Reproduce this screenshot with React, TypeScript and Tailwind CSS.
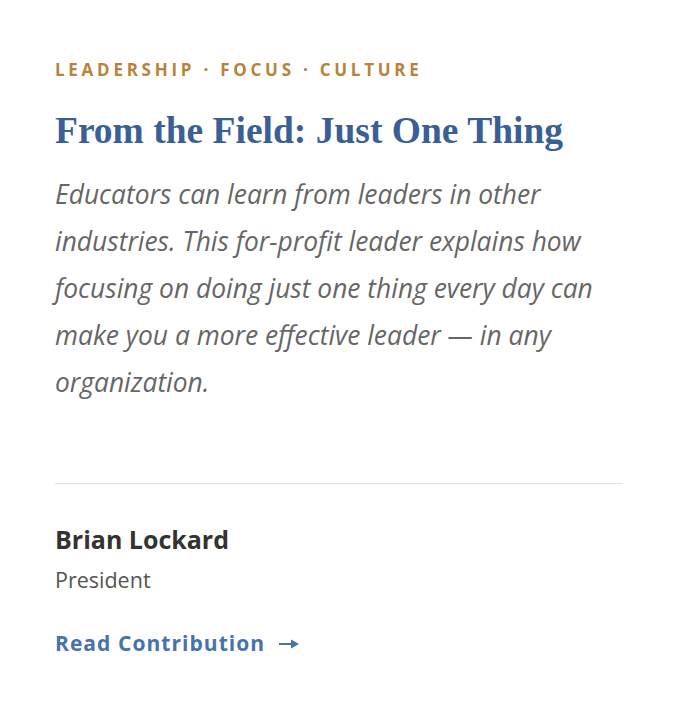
export default function App() {
  return (
    <div className="w-[678px] h-[724px] bg-white px-[55px] pt-[59px]" style={{ fontFamily: '"Open Sans", "Noto Sans", sans-serif' }}>
      <div className="text-[17px] leading-[22px] font-bold tracking-[0.22em] text-[#b7833b]">
        LEADERSHIP · FOCUS · CULTURE
      </div>
      <h1
        className="mt-[27px] text-[37.5px] leading-[46px] font-bold text-[#3a5f96]"
        style={{ fontFamily: '"Liberation Serif", "DejaVu Serif", serif' }}
      >
        From the Field: Just One Thing
      </h1>
      <p className="mt-[17px] max-w-[550px] text-[26.4px] leading-[47px] italic text-[#666666]">
        Educators can learn from leaders in other industries. This for-profit leader explains how focusing on doing just one thing every day can make you a more effective leader — in any organization.
      </p>
      <div className="mt-[77px] h-px bg-[#dcdfe8]" />
      <div className="mt-[39px] text-[25px] leading-[32px] font-bold text-[#333333]">Brian Lockard</div>
      <div className="mt-[10px] text-[21.5px] leading-[30px] text-[#555555]">President</div>
      <div className="mt-[34px] flex items-center gap-[14px] text-[21px] leading-[28px] font-bold tracking-[0.05em] text-[#4672ad]">
        <span>Read Contribution</span>
        <svg width="20" height="10" viewBox="0 0 20 10" className="mt-[1px]">
          <rect x="0" y="4" width="14" height="2" fill="#4672ad" />
          <polygon points="12,0.5 20,5 12,9.5" fill="#4672ad" />
        </svg>
      </div>
    </div>
  );
}
